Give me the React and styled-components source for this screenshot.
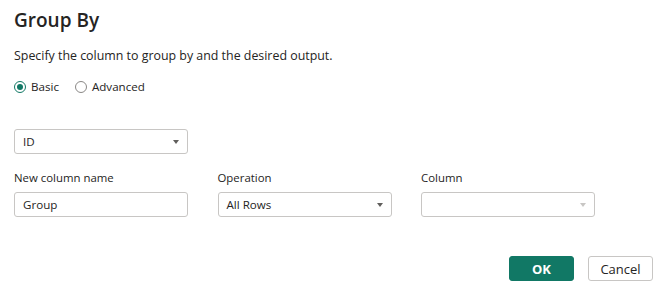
import React from "react";
import styled, { createGlobalStyle } from "styled-components";

const Global = createGlobalStyle`
  html, body { margin: 0; padding: 0; background: #ffffff; }
  body { font-family: "Open Sans", "Noto Sans", sans-serif; color: #252423; }
`;

const Dialog = styled.div`
  width: 665px;
  height: 291px;
  box-sizing: border-box;
  padding: 8px 12px 10px 14px;
  display: flex;
  flex-direction: column;
`;

const Title = styled.h1`
  margin: 0;
  font-size: 19px;
  font-weight: 600;
  line-height: 24px;
  color: #252423;
`;

const Description = styled.p`
  margin: 15px 0 0;
  font-size: 12.4px;
  line-height: 18px;
  color: #252423;
`;

const RadioGroup = styled.div`
  display: flex;
  gap: 16px;
  margin-top: 14px;
`;

const RadioLabel = styled.label`
  display: flex;
  align-items: center;
  gap: 5px;
  font-size: 11.6px;
  line-height: 16px;
  color: #252423;
`;

const RadioCircle = styled.span`
  width: 12px;
  height: 12px;
  box-sizing: border-box;
  border-radius: 50%;
  border: 1px solid ${(p) => (p.$checked ? "#117865" : "#8a8886")};
  display: flex;
  align-items: center;
  justify-content: center;
  &::after {
    content: "";
    width: 6px;
    height: 6px;
    border-radius: 50%;
    background: ${(p) => (p.$checked ? "#117865" : "transparent")};
  }
`;

const Field = styled.div`
  display: flex;
  flex-direction: column;
  width: 174px;
`;

const KeyField = styled(Field)`
  margin-top: 34px;
`;

const Row = styled.div`
  display: flex;
  gap: 29.5px;
  margin-top: 16px;
`;

const Label = styled.span`
  font-size: 11.4px;
  line-height: 16px;
  color: #252423;
  margin-bottom: 6px;
`;

const Box = styled.div`
  height: 25px;
  box-sizing: border-box;
  border: 1px solid #c8c6c4;
  border-radius: 3px;
  display: flex;
  align-items: center;
  padding: 0 8px 0 8px;
  font-size: 11.6px;
  color: #252423;
  background: #fff;
`;

const BoxText = styled.span`
  flex: 1;
`;

const Caret = styled.span`
  width: 0;
  height: 0;
  border-left: 3.5px solid transparent;
  border-right: 3.5px solid transparent;
  border-top: 4px solid ${(p) => (p.$disabled ? "#c8c6c4" : "#605e5c")};
`;

const Footer = styled.div`
  margin-top: auto;
  display: flex;
  justify-content: flex-end;
  gap: 14px;
`;

const Button = styled.button`
  width: 65px;
  height: 25px;
  box-sizing: border-box;
  border-radius: 3px;
  font-family: inherit;
  font-size: 13px;
  font-weight: ${(p) => (p.$primary ? 700 : 400)};
  border: 1px solid ${(p) => (p.$primary ? "#117865" : "#c8c6c4")};
  background: ${(p) => (p.$primary ? "#117865" : "#ffffff")};
  color: ${(p) => (p.$primary ? "#ffffff" : "#252423")};
  padding: 0;
`;

function Select({ value, disabled }) {
  return (
    <Box>
      <BoxText>{value}</BoxText>
      <Caret $disabled={disabled} />
    </Box>
  );
}

export default function App() {
  return (
    <>
      <Global />
      <Dialog>
        <Title>Group By</Title>
        <Description>Specify the column to group by and the desired output.</Description>
        <RadioGroup>
          <RadioLabel>
            <RadioCircle $checked />
            Basic
          </RadioLabel>
          <RadioLabel>
            <RadioCircle />
            Advanced
          </RadioLabel>
        </RadioGroup>
        <KeyField>
          <Select value="ID" />
        </KeyField>
        <Row>
          <Field>
            <Label>New column name</Label>
            <Box>
              <BoxText>Group</BoxText>
            </Box>
          </Field>
          <Field>
            <Label>Operation</Label>
            <Select value="All Rows" />
          </Field>
          <Field>
            <Label>Column</Label>
            <Select value="" disabled />
          </Field>
        </Row>
        <Footer>
          <Button $primary>OK</Button>
          <Button>Cancel</Button>
        </Footer>
      </Dialog>
    </>
  );
}
